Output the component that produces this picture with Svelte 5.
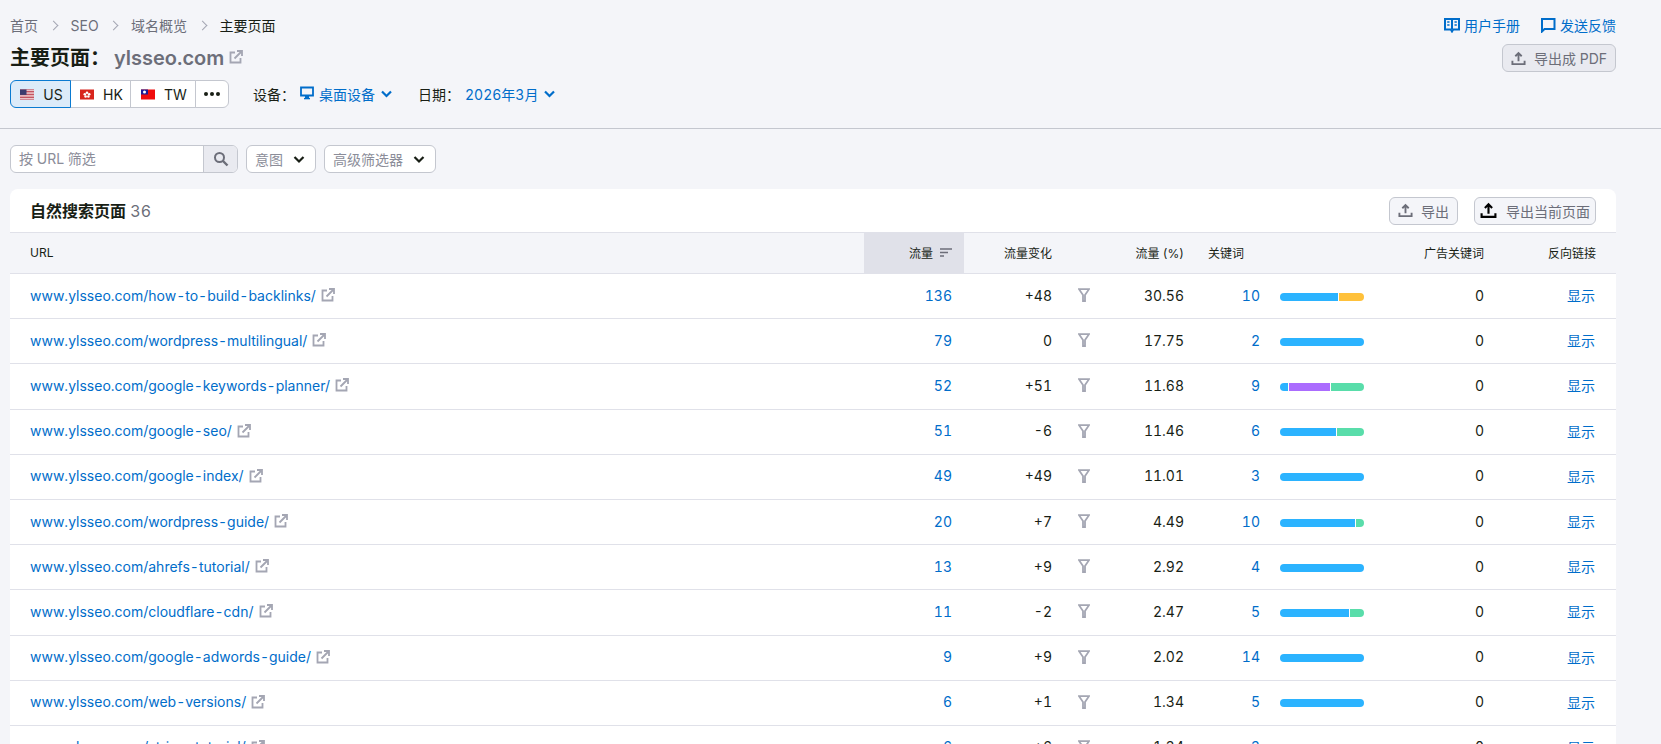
<script>
  const rows = [
    { p: 'how-to-build-backlinks/', t: '136', c: '+48', s: '30.56', k: '10', bar: [['b', 70], ['y', 30]] },
    { p: 'wordpress-multilingual/', t: '79', c: '0', s: '17.75', k: '2', bar: [['b', 100]] },
    { p: 'google-keywords-planner/', t: '52', c: '+51', s: '11.68', k: '9', bar: [['b', 10], ['p', 50], ['g', 40]] },
    { p: 'google-seo/', t: '51', c: '-6', s: '11.46', k: '6', bar: [['b', 67], ['g', 33]] },
    { p: 'google-index/', t: '49', c: '+49', s: '11.01', k: '3', bar: [['b', 100]] },
    { p: 'wordpress-guide/', t: '20', c: '+7', s: '4.49', k: '10', bar: [['b', 90], ['g', 10]] },
    { p: 'ahrefs-tutorial/', t: '13', c: '+9', s: '2.92', k: '4', bar: [['b', 100]] },
    { p: 'cloudflare-cdn/', t: '11', c: '-2', s: '2.47', k: '5', bar: [['b', 83], ['g', 17]] },
    { p: 'google-adwords-guide/', t: '9', c: '+9', s: '2.02', k: '14', bar: [['b', 100]] },
    { p: 'web-versions/', t: '6', c: '+1', s: '1.34', k: '5', bar: [['b', 100]] },
    { p: 'stripe-tutorial/', t: '6', c: '+6', s: '1.34', k: '3', bar: [['b', 100]] }
  ];
  const usStripes = [0, 2, 4, 6, 8, 10, 12];
</script>

{#snippet ext(cls)}
  <svg class={cls} viewBox="0 0 14 14" aria-hidden="true"><path d="M6 2.500H1.500v10h10V8" fill="none" stroke="currentColor" stroke-width="1.800"/><path d="M5.500 8.500 12 2M8 1h5v5" fill="none" stroke="currentColor" stroke-width="1.800"/></svg>
{/snippet}
{#snippet upload(cls)}
  <svg class={cls} viewBox="0 0 16 16" aria-hidden="true"><path d="M8 11V2.600M4.600 5.600 8 2.200l3.400 3.400M1.500 10.500v3.500h13v-3.500" fill="none" stroke="currentColor" stroke-width="2"/></svg>
{/snippet}
{#snippet chevron(cls)}
  <svg class={cls} viewBox="0 0 12 8" aria-hidden="true"><path d="M1.500 1.500 6 6l4.500-4.500" fill="none" stroke="currentColor" stroke-width="2.200"/></svg>
{/snippet}

<div class="page">
  <header class="top">
    <div class="top-left">
      <nav class="crumbs">
        <span>首页</span><i class="sep"></i><span>SEO</span><i class="sep"></i><span>域名概览</span><i class="sep"></i><span class="cur">主要页面</span>
      </nav>
      <h1><span class="h-b">主要页面：</span><span class="dom">ylsseo.com</span>{@render ext('h-ext')}</h1>
      <div class="filters">
        <div class="group">
          <button class="seg on">
            <svg class="flag" viewBox="0 0 14 10"><rect width="14" height="10" fill="#fff"/>{#each usStripes as s}<rect y={s * 0.77} width="14" height="0.77" fill="#b22234"/>{/each}<rect width="6.500" height="5.400" fill="#3c3b6e"/></svg>
            US
          </button>
          <button class="seg">
            <svg class="flag" viewBox="0 0 14 10"><rect width="14" height="10" fill="#d8251d"/><g fill="#fff"><circle cx="7" cy="3.200" r="1.300"/><circle cx="4.800" cy="4.800" r="1.300"/><circle cx="9.200" cy="4.800" r="1.300"/><circle cx="5.600" cy="7" r="1.300"/><circle cx="8.400" cy="7" r="1.300"/></g></svg>
            HK
          </button>
          <button class="seg tw">
            <svg class="flag" viewBox="0 0 14 10"><rect width="14" height="10" fill="#f00c0c"/><rect width="7" height="5" fill="#1a1c96"/><circle cx="3.500" cy="2.500" r="1.500" fill="#fff"/></svg>
            TW
          </button>
          <button class="seg more"><b></b><b></b><b></b></button>
        </div>
        <span class="lbl dev">设备：</span>
        <span class="val">
          <svg class="mon" viewBox="0 0 14 14"><path d="M1 1.500h12v8H1z" fill="none" stroke="currentColor" stroke-width="1.800"/><path d="M5 10h4v2H5z" fill="currentColor"/><path d="M4 12.600h6" stroke="currentColor" stroke-width="1.400"/></svg>
          桌面设备{@render chevron('chev')}
        </span>
        <span class="lbl date">日期：</span>
        <span class="val">2026年3月{@render chevron('chev')}</span>
      </div>
    </div>
    <div class="top-right">
      <div class="links">
        <a class="lnk" href="#m">
          <svg class="ic16" viewBox="0 0 16 16"><path d="M1 2h14v10.500H9.200L8 14.500l-1.200-2H1z" fill="none" stroke="currentColor" stroke-width="2"/><path d="M8 2v10" stroke="currentColor" stroke-width="2"/><path d="M3.200 5h2.300M3.200 8h2.300M10.500 5h2.300M10.500 8h2.300" stroke="currentColor" stroke-width="1.300"/></svg>
          用户手册
        </a>
        <a class="lnk" href="#f">
          <svg class="ic16" viewBox="0 0 16 16"><path d="M2 14.500V2h12.500v10H4.500z" fill="none" stroke="currentColor" stroke-width="2"/></svg>
          发送反馈
        </a>
      </div>
      <button class="btn pdf">{@render upload('up')}导出成 PDF</button>
    </div>
  </header>

  <main class="body">
    <div class="toolbar">
      <div class="search">
        <span class="ph">按 URL 筛选</span>
        <span class="sbtn"><svg viewBox="0 0 16 16"><circle cx="6.500" cy="6.500" r="4.500" fill="none" stroke="currentColor" stroke-width="2"/><path d="m10 10 4.500 4.500" stroke="currentColor" stroke-width="2.400"/></svg></span>
      </div>
      <button class="sel intent">意图{@render chevron('dark')}</button>
      <button class="sel adv">高级筛选器{@render chevron('dark')}</button>
    </div>

    <section class="card">
      <div class="card-head">
        <h2>自然搜索页面 <span>36</span></h2>
        <div class="actions">
          <button class="btn exp">{@render upload('up')}导出</button>
          <button class="btn exp cur-p">{@render upload('up blk')}导出当前页面</button>
        </div>
      </div>
      <div class="row th">
        <div class="url">URL</div>
        <div class="tr sorted">流量<svg class="sort" viewBox="0 0 12 9"><path d="M0 1h12M0 4.500h8M0 8h4" stroke="currentColor" stroke-width="1.500"/></svg></div>
        <div class="chg">流量变化</div>
        <div class="fn"></div>
        <div class="sh">流量 (%)</div>
        <div class="kw kw-h">关键词</div>
        <div class="bar-c"></div>
        <div class="ad">广告关键词</div>
        <div class="bl">反向链接</div>
      </div>
      {#each rows as r}
        <div class="row td">
          <div class="url"><a href="#u">www.ylsseo.com/{r.p}</a>{@render ext('r-ext')}</div>
          <div class="tr blue">{r.t}</div>
          <div class="chg">{r.c}</div>
          <div class="fn"><svg viewBox="0 0 12 14"><path d="M1 1.200h10L7 7v6H5V7z" fill="none" stroke="currentColor" stroke-width="1.800"/></svg></div>
          <div class="sh">{r.s}</div>
          <div class="kw blue">{r.k}</div>
          <div class="bar-c"><div class="bar">{#each r.bar as [c, w]}<i class={c} style="flex-grow:{w}"></i>{/each}</div></div>
          <div class="ad">0</div>
          <div class="bl blue">显示</div>
        </div>
      {/each}
    </section>
  </main>
</div>

<style>
  :global(body) {
    margin: 0;
    background: #f4f5f9;
    overflow: hidden;
  }
  .page {
    height: 744px;
    overflow: hidden;
    font-family: Inter, "Noto Sans CJK SC", sans-serif;
    font-size: 14px;
    font-variant-numeric: tabular-nums;
    color: #181e15;
  }
  button {
    font: inherit;
    cursor: pointer;
  }
  .top {
    height: 129px;
    box-sizing: border-box;
    border-bottom: 1px solid #c4c7cf;
    display: flex;
    justify-content: space-between;
    padding: 15px 45px 0 10px;
  }
  .crumbs {
    display: flex;
    align-items: center;
    height: 20px;
    font-size: 14px;
    color: #6c6e79;
  }
  .cur {
    color: #181e15;
  }
  .sep {
    box-sizing: border-box;
    width: 7px;
    height: 7px;
    margin: 0 14px 0 11.500px;
    border-top: 1.500px solid #a4a6b3;
    border-right: 1.500px solid #a4a6b3;
    transform: rotate(45deg);
  }
  h1 {
    margin: 9px 0 0;
    display: flex;
    align-items: center;
    height: 28px;
    font-size: 20px;
    font-weight: 700;
    line-height: 28px;
  }
  .h-b {
    width: 104px;
  }
  .dom {
    color: #6c6e79;
    font-weight: 600;
  }
  .h-ext {
    width: 14px;
    height: 14px;
    margin: -2px 0 0 5px;
    color: #a4a6b3;
  }
  .filters {
    display: flex;
    align-items: center;
    margin-top: 8px;
    height: 28px;
    white-space: nowrap;
  }
  .group {
    display: flex;
    height: 28px;
  }
  .seg {
    box-sizing: border-box;
    height: 28px;
    width: 61px;
    padding: 0 0 0 2px;
    margin-left: -1px;
    background: #fff;
    border: 1px solid #c4c7cf;
    display: flex;
    align-items: center;
    justify-content: center;
    gap: 9px;
    color: #181e15;
    font-size: 14px;
  }
  .seg:first-child {
    margin-left: 0;
    border-radius: 6px 0 0 6px;
  }
  .seg.on {
    background: #dcebf9;
    border-color: #0a7ad1;
    position: relative;
    z-index: 1;
  }
  .tw {
    width: 66px;
  }
  .more {
    width: 34px;
    padding: 0;
    gap: 2px;
    border-radius: 0 6px 6px 0;
  }
  .more b {
    width: 4px;
    height: 4px;
    border-radius: 50%;
    background: #181e15;
  }
  .flag {
    width: 14px;
    height: 11px;
  }
  .lbl {
    font-size: 14px;
    color: #181e15;
  }
  .dev {
    margin-left: 24px;
  }
  .date {
    margin-left: 25px;
  }
  .val {
    display: inline-flex;
    align-items: center;
    font-size: 14px;
    color: #006dca;
    margin-left: 5px;
  }
  .mon {
    width: 14px;
    height: 14px;
    margin-right: 5px;
    margin-top: -2px;
  }
  .chev {
    width: 13px;
    height: 8px;
    margin-left: 5px;
  }
  .top-right {
    display: flex;
    flex-direction: column;
    align-items: flex-end;
  }
  .links {
    display: flex;
    gap: 20px;
    height: 20px;
    align-items: center;
  }
  .lnk {
    display: flex;
    align-items: center;
    gap: 4px;
    color: #006dca;
    font-size: 14px;
    text-decoration: none;
  }
  .ic16 {
    width: 16px;
    height: 16px;
  }
  .btn {
    display: inline-flex;
    align-items: center;
    box-sizing: border-box;
    height: 28px;
    padding: 0 8px;
    background: #e9eaf0;
    border: 1px solid #c4c7cf;
    border-radius: 6px;
    color: #6c6e79;
    font-size: 14px;
    white-space: nowrap;
  }
  .pdf {
    margin-top: 9px;
    width: 114px;
    justify-content: center;
  }
  .up {
    flex: none;
    width: 15px;
    height: 15px;
    margin-right: 8px;
  }
  .blk {
    width: 17px;
    height: 17px;
    margin-right: 9px;
    color: #000;
  }
  .body {
    padding: 16px 45px 0 10px;
  }
  .toolbar {
    display: flex;
    height: 28px;
    gap: 8px;
  }
  .search {
    box-sizing: border-box;
    width: 228px;
    height: 28px;
    display: flex;
    background: #fff;
    border: 1px solid #c4c7cf;
    border-radius: 6px;
    overflow: hidden;
  }
  .ph {
    flex: 1;
    padding-left: 8px;
    line-height: 26px;
    font-size: 14px;
    color: #8b8d99;
  }
  .sbtn {
    width: 33px;
    background: #e9eaf0;
    border-left: 1px solid #c4c7cf;
    display: flex;
    align-items: center;
    justify-content: center;
    color: #6c6e79;
  }
  .sbtn svg {
    width: 16px;
    height: 16px;
  }
  .sel {
    box-sizing: border-box;
    height: 28px;
    padding: 0 10px 1px 8px;
    display: flex;
    align-items: center;
    justify-content: space-between;
    background: #fff;
    border: 1px solid #c4c7cf;
    border-radius: 6px;
    color: #8b8d99;
    font-size: 14px;
  }
  .intent {
    width: 70px;
  }
  .adv {
    width: 112px;
  }
  .dark {
    width: 12px;
    height: 9px;
    margin-top: 1px;
    color: #181e15;
  }
  .card {
    margin-top: 16px;
    background: #fff;
    border-radius: 8px 8px 0 0;
  }
  .card-head {
    height: 43px;
    box-sizing: border-box;
    display: flex;
    align-items: center;
    justify-content: space-between;
    padding: 0 20px;
  }
  h2 {
    margin: 0 0 1px;
    font-size: 16px;
    font-weight: 700;
  }
  h2 span {
    font-weight: 400;
    color: #6c6e79;
  }
  .actions {
    display: flex;
    gap: 16px;
  }
  .exp {
    background: #f4f5f9;
    width: 69px;
    justify-content: center;
  }
  .cur-p {
    width: 122px;
    padding: 0 4px;
  }
  .row {
    display: flex;
    align-items: center;
    box-sizing: border-box;
    border-top: 1px solid #e0e1e9;
  }
  .row > div {
    flex: none;
    box-sizing: border-box;
    white-space: nowrap;
  }
  .th {
    height: 41px;
    background: #f4f5f9;
    font-size: 12px;
  }
  .th > div {
    padding-bottom: 1px;
  }
  .td {
    height: 45.200px;
    padding-bottom: 2px;
    font-size: 14px;
  }
  .url {
    width: 854px;
    padding-left: 20px;
    display: flex;
    align-items: center;
  }
  .url a {
    color: #006dca;
    text-decoration: none;
  }
  .r-ext {
    width: 14px;
    height: 14px;
    margin-left: 5px;
    color: #a4a6b3;
  }
  .tr {
    width: 100px;
    text-align: right;
    padding-right: 12px;
  }
  .th .sorted {
    align-self: stretch;
    background: #e0e1e9;
    display: flex;
    align-items: center;
    justify-content: flex-end;
  }
  .sort {
    width: 12px;
    height: 9px;
    margin-left: 7px;
    color: #6c6e79;
  }
  .chg {
    width: 88px;
    text-align: right;
  }
  .fn {
    width: 64px;
    display: flex;
    justify-content: center;
    color: #a4a6b3;
  }
  .fn svg {
    width: 12px;
    height: 14px;
  }
  .sh {
    width: 68px;
    text-align: right;
  }
  .kw {
    width: 76px;
    text-align: right;
  }
  .th .kw-h {
    padding-left: 24px;
    text-align: left;
  }
  .bar-c {
    width: 84px;
    margin-left: 20px;
  }
  .td .bar-c {
    margin-top: 3px;
  }
  .bar {
    display: flex;
    gap: 1px;
    height: 8px;
    border-radius: 4px;
    overflow: hidden;
  }
  .bar i {
    flex-basis: 0;
  }
  .b {
    background: #2bb3ff;
  }
  .y {
    background: #ffc13b;
  }
  .p {
    background: #ab6cfe;
  }
  .g {
    background: #59ddaa;
  }
  .ad {
    width: 120px;
    text-align: right;
  }
  .bl {
    width: 112px;
    text-align: right;
  }
  .td .bl {
    padding-right: 1px;
  }
  .blue {
    color: #006dca;
  }
</style>
